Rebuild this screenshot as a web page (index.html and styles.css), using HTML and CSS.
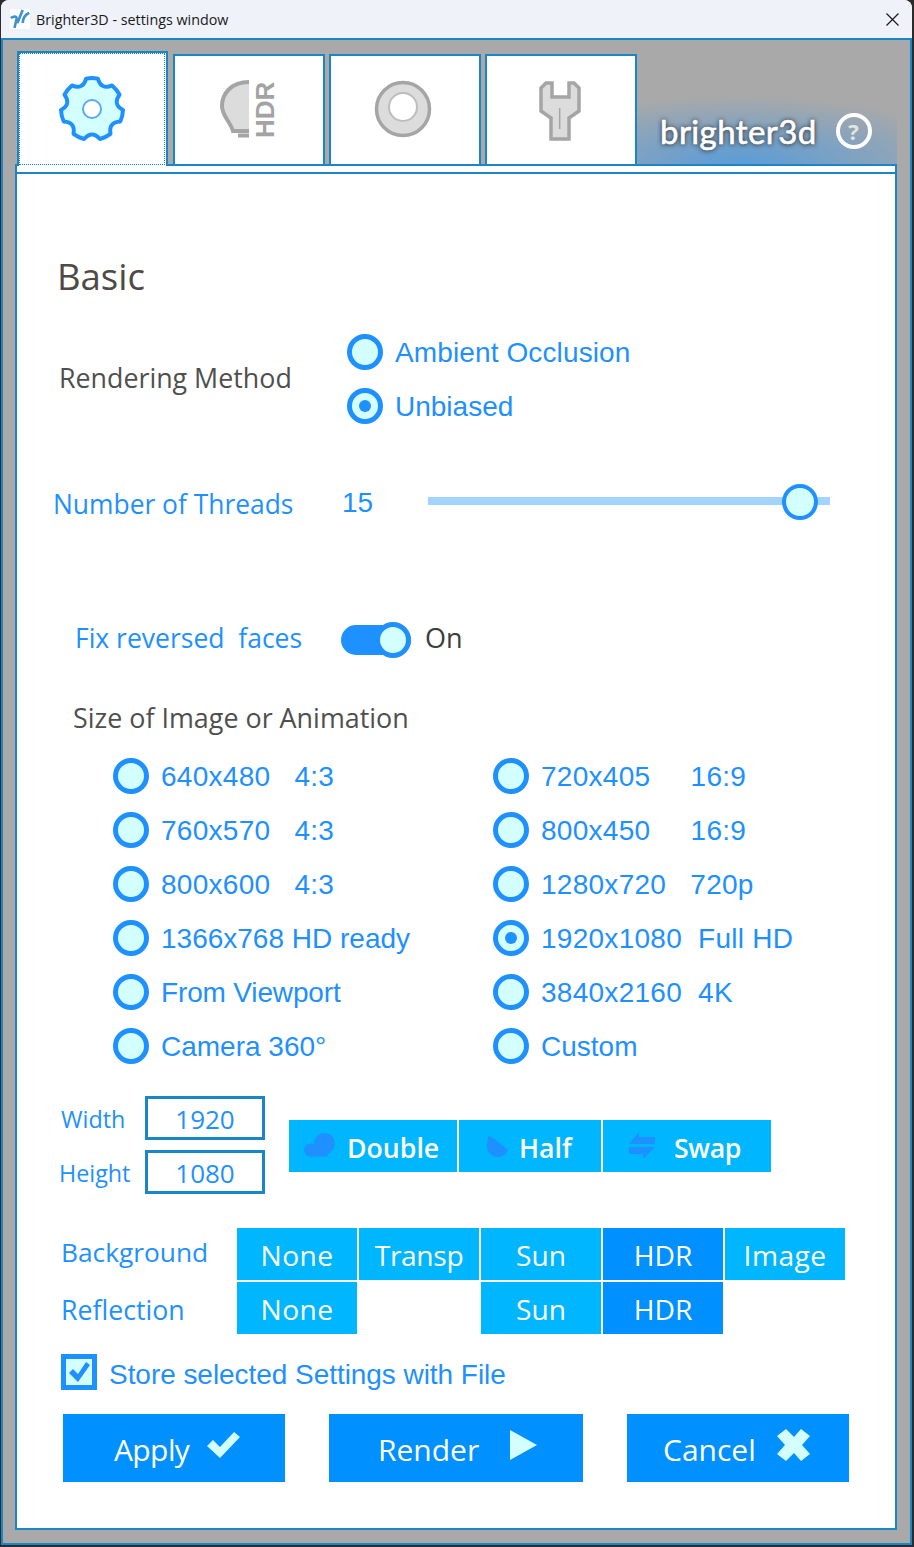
FILE: index.html
```html
<!DOCTYPE html>
<html lang="en">
<head>
<meta charset="utf-8">
<title>Brighter3D - settings window</title>
<link rel="stylesheet" href="styles.css">
</head>
<body>
<div class="window">
  <header class="titlebar">
    <svg class="app-icon" viewBox="0 0 20 20"><rect width="20" height="20" fill="#fff"/><path class="app-stroke" d="M.7 9C4 7 7 7 6.500 10L4.500 19M7.300 14.300L12.700 1M12.700 14C13 9 15 5.500 19.300 4"/></svg>
    <span class="title-text">Brighter3D - settings window</span>
    <svg class="close-icon" viewBox="0 0 13 13"><path d="M.5.5l12 12M12.5.5l-12 12"/></svg>
  </header>
  <main class="main">
    <nav class="tabs">
      <div class="tab tab-active">
        <svg class="gear" viewBox="0 0 68 68"><path class="gear-body" d="M28.1 3.600A31 31 0 0 1 39.900 3.600Q43.100 15.100 54.100 10.400A31 31 0 0 1 61.500 19.700Q54.500 29.300 65 35A31 31 0 0 1 62.300 46.500Q50.400 47.100 52.500 58.900A31 31 0 0 1 41.900 64Q34 55 26.100 64A31 31 0 0 1 15.500 58.900Q17.600 47.100 5.700 46.500A31 31 0 0 1 3 35Q13.500 29.300 6.500 19.700A31 31 0 0 1 13.900 10.400Q24.900 15.100 28.100 3.600Z"/><circle class="gear-hole" cx="34" cy="34" r="9"/></svg>
      </div>
      <div class="tab">
        <svg class="tab-icon" viewBox="0 0 60 60"><path class="gray-fill" d="M30 3C12 3 3 15 3 27c0 10 8 15 11 25h16z"/><path class="gray-line" d="M30 3C12 3 3 15 3 27c0 10 8 15 11 25h16M19 56.500h11"/><text class="hdr-text" transform="translate(55 59) rotate(-90)">HDR</text></svg>
      </div>
      <div class="tab">
        <svg class="tab-icon" viewBox="0 0 60 60"><circle class="gray-disc" cx="28" cy="30" r="26.500"/><circle class="gray-hole" cx="28" cy="28" r="14"/></svg>
      </div>
      <div class="tab">
        <svg class="wrench-icon" viewBox="0 0 60 64"><path class="gray-disc" d="M10 10L15 5H21V19H38V5H43L48 10V33L38 40V61H20V40L10 33Z"/><path class="gray-slit" d="M28.700 30V51"/></svg>
      </div>
      <div class="brand">
        <span class="brand-name">brighter3d</span>
        <span class="help">?</span>
      </div>
    </nav>
    <section class="panel">
      <div class="panel-body">
        <h1 class="heading">Basic</h1>

        <div class="method-row">
          <div class="method-label">Rendering Method</div>
          <div class="method-options">
            <label class="option"><span class="radio"></span><span class="option-text text-ambient">Ambient Occlusion</span></label>
            <label class="option"><span class="radio radio-on"></span><span class="option-text">Unbiased</span></label>
          </div>
        </div>

        <div class="threads-row">
          <div class="threads-label">Number of Threads</div>
          <div class="threads-value">15</div>
          <div class="slider"><span class="slider-thumb"></span></div>
        </div>

        <div class="toggle-row">
          <div class="toggle-label">Fix reversed&nbsp; faces</div>
          <div class="toggle"><span class="toggle-knob"></span></div>
          <div class="toggle-state">On</div>
        </div>

        <div class="size-title">Size of Image or Animation</div>
        <div class="size-grid">
          <label class="option"><span class="radio"></span><span class="option-text text-res">640x480   4:3</span></label>
          <label class="option"><span class="radio"></span><span class="option-text text-res">720x405     16:9</span></label>
          <label class="option"><span class="radio"></span><span class="option-text text-res">760x570   4:3</span></label>
          <label class="option"><span class="radio"></span><span class="option-text text-res">800x450     16:9</span></label>
          <label class="option"><span class="radio"></span><span class="option-text text-res">800x600   4:3</span></label>
          <label class="option"><span class="radio"></span><span class="option-text text-res">1280x720   720p</span></label>
          <label class="option"><span class="radio"></span><span class="option-text">1366x768 HD ready</span></label>
          <label class="option"><span class="radio radio-on"></span><span class="option-text text-res">1920x1080  Full HD</span></label>
          <label class="option"><span class="radio"></span><span class="option-text text-view">From Viewport</span></label>
          <label class="option"><span class="radio"></span><span class="option-text text-res">3840x2160  4K</span></label>
          <label class="option"><span class="radio"></span><span class="option-text">Camera 360°</span></label>
          <label class="option"><span class="radio"></span><span class="option-text">Custom</span></label>
        </div>

        <div class="dims-row">
          <div class="dims">
            <div class="dim"><span class="dim-label dim-label-width">Width</span><span class="dim-box">1920</span></div>
            <div class="dim"><span class="dim-label">Height</span><span class="dim-box">1080</span></div>
          </div>
          <div class="size-buttons">
            <button class="size-btn btn-double">
              <svg class="icon-cloud" viewBox="0 0 31 24"><circle cx="20.500" cy="10.500" r="10.500"/><circle cx="6.500" cy="17" r="6.500"/><rect x="6.500" y="12" width="17" height="11.500"/></svg>
              <span>Double</span>
            </button>
            <button class="size-btn btn-half">
              <svg class="icon-half" viewBox="0 0 21 21"><path d="M1 0C5 0 15 9 21 14c-2 5-6 7-10 7C4 21 0 15 0 10z"/></svg>
              <span>Half</span>
            </button>
            <button class="size-btn btn-swap">
              <svg class="icon-swap" viewBox="0 0 26 27"><path d="M10 0v5h16v7H0zM0 15h26L14 27v-5H0z"/></svg>
              <span class="swap-text">Swap</span>
            </button>
          </div>
        </div>

        <div class="modes">
          <div class="mode-label">Background</div>
          <button class="mode-btn mode-wide">None</button>
          <button class="mode-btn mode-tight">Transp</button>
          <button class="mode-btn">Sun</button>
          <button class="mode-btn mode-on">HDR</button>
          <button class="mode-btn mode-wide">Image</button>
          <div class="mode-label mode-label-low">Reflection</div>
          <button class="mode-btn mode-wide">None</button>
          <span class="mode-gap"></span>
          <button class="mode-btn">Sun</button>
          <button class="mode-btn mode-on">HDR</button>
        </div>

        <label class="store-row">
          <span class="checkbox"><svg class="check-small" viewBox="0 0 24 22"><path d="M2 12l4-4 5 5L19 1l4 3-12 17z"/></svg></span>
          <span class="option-text store-text">Store selected Settings with File</span>
        </label>

        <div class="actions">
          <button class="action action-apply"><span class="apply-text">Apply</span><svg class="action-icon" viewBox="0 0 33 26"><path d="M0 14l6-6 7 7L27 0l6 5-20 21z"/></svg></button>
          <button class="action action-render"><span>Render</span><svg class="action-icon icon-play" viewBox="0 0 27 30"><path d="M0 0l27 15L0 30z"/></svg></button>
          <button class="action action-cancel"><span>Cancel</span><svg class="action-icon icon-x" viewBox="0 0 33 32"><path d="M9 0l8 8 7-8 9 7-8 9 8 9-9 7-7-8-8 8-9-7 8-9-8-9z"/></svg></button>
        </div>
      </div>
    </section>
  </main>
</div>
</body>
</html>
```

FILE: styles.css
```css
* { box-sizing: border-box; }
html, body { margin: 0; padding: 0; }
body {
  width: 914px;
  height: 1547px;
  background: #2b2b2b;
  font-family: "Open Sans", "Noto Sans", sans-serif;
  overflow: hidden;
}
button { border: 0; padding: 0; margin: 0; cursor: pointer; font-family: inherit; color: #fff; }
label { cursor: pointer; }

.window {
  width: 911px;
  height: 1545px;
  margin-left: 1px;
  border-radius: 8px 8px 0 0;
  overflow: hidden;
  display: flex;
  flex-direction: column;
  background: #eef1f9;
}

/* title bar */
.titlebar {
  height: 38px;
  flex: none;
  display: flex;
  align-items: center;
  padding: 0 13px 0 9px;
  background: #eff2f9;
}
.app-icon { width: 20px; height: 20px; flex: none; }
.app-stroke { fill: none; stroke: #3f92cc; stroke-width: 2.6; }
.title-text { margin-left: 6px; font-size: 14.3px; color: #1a1a1a; flex: 1; }
.close-icon { width: 13px; height: 13px; fill: none; stroke: #1a1a1a; stroke-width: 1.2; }

/* main area */
.main {
  flex: 1;
  min-height: 0;
  display: flex;
  flex-direction: column;
  background: #a9a9a9;
  border: 2px solid #1a85c7;
  padding: 11px 13px 13px 12px;
}

/* tabs */
.tabs {
  display: flex;
  align-items: flex-end;
  gap: 4px;
  height: 113px;
  padding-left: 2px;
  flex: none;
  position: relative;
  z-index: 1;
}
.tab {
  width: 152px;
  height: 110px;
  flex: none;
  display: flex;
  align-items: center;
  justify-content: center;
  background: #fff;
  border: 2px solid #1a85c7;
  border-bottom: 0;
}
.tab-active {
  width: 151px;
  height: 115px;
  margin-bottom: -2px;
  margin-right: 1px;
  position: relative;
}
.tab-active::after {
  content: "";
  position: absolute;
  inset: 0 1px 1px 0;
  border: 1px dotted #1a85c7;
}
.gear { width: 68px; height: 68px; margin-top: -1px; margin-right: 1px; }
.gear-body { fill: #d4ffff; stroke: #1e90ff; stroke-width: 4; stroke-linejoin: round; }
.gear-hole { fill: #fff; stroke: #5aa9f5; stroke-width: 2; }
.tab-icon { width: 60px; height: 60px; margin-top: -2px; overflow: visible; }
.wrench-icon { width: 60px; height: 64px; }
.gray-fill { fill: #dcdcdc; }
.gray-line { fill: none; stroke: #a5a5a5; stroke-width: 4; }
.gray-disc { fill: #dcdcdc; stroke: #a5a5a5; stroke-width: 3.5; }
.gray-hole { fill: #fff; stroke: #bdbdbd; stroke-width: 2; }
.gray-slit { fill: none; stroke: #a5a5a5; stroke-width: 1.5; }
.hdr-text {
  font-family: "Liberation Sans", Arial, sans-serif;
  font-weight: 700;
  font-size: 26px;
  fill: #a3a3a3;
}

/* brand */
.brand {
  flex: 1;
  height: 110px;
  display: flex;
  align-items: flex-end;
  padding: 0 0 15px 23px;
  margin-left: -4px;
  background: radial-gradient(ellipse 240px 68px at 103px 100%, #5a9cd8 0%, rgba(90, 156, 216, 0) 100%);
}
.brand-name {
  font-family: Lato, "Open Sans", sans-serif;
  font-size: 33px;
  line-height: 36px;
  letter-spacing: .4px;
  color: #fff;
  -webkit-text-stroke: .6px #fff;
  text-shadow: 0 0 4px rgba(50, 50, 50, .9), 0 1px 5px rgba(50, 50, 50, .6);
}
.help {
  width: 36px;
  height: 36px;
  margin-left: 19px;
  border: 4px solid #fff;
  border-radius: 50%;
  display: flex;
  align-items: center;
  justify-content: center;
  font-size: 22px;
  font-weight: 700;
  color: #e4e4e4;
}

/* panel */
.panel {
  flex: 1;
  min-height: 0;
  background: #fff;
  border: 2px solid #1a85c7;
  padding-top: 6px;
}
.panel-body {
  height: 100%;
  border-top: 2px solid #1a85c7;
}
.heading {
  margin: 78px 0 0;
  padding-left: 40px;
  font-size: 36.5px;
  line-height: 48px;
  font-weight: 400;
  color: #4f4a45;
}

/* common option */
.option { display: flex; align-items: center; gap: 12px; height: 36px; }
.option-text {
  font-family: "Liberation Sans", Arial, sans-serif;
  font-size: 28px;
  padding-top: 2px;
  color: #1e90ff;
  white-space: pre;
}
.text-res { letter-spacing: .27px; }
.text-ambient { letter-spacing: .12px; }
.text-view { letter-spacing: -.15px; }
.radio {
  width: 36px;
  height: 36px;
  flex: none;
  border: 5px solid #1e90ff;
  border-radius: 50%;
  background: #d4ffff;
  display: flex;
  align-items: center;
  justify-content: center;
}
.radio-on::before {
  content: "";
  width: 12px;
  height: 12px;
  border-radius: 50%;
  background: #1e90ff;
}

/* rendering method */
.method-row { display: flex; align-items: center; margin-top: 34px; }
.method-label { width: 330px; padding: 0 0 4px 42px; font-size: 26.8px; color: #4f4f4f; }
.method-options { display: flex; flex-direction: column; gap: 18px; }

/* threads */
.threads-row { display: flex; align-items: center; height: 36px; margin-top: 60px; }
.threads-label { width: 325px; padding-left: 36px; padding-top: 3px; font-size: 26.4px; color: #1e90ff; }
.threads-value {
  width: 86px;
  padding-top: 2px;
  font-family: "Liberation Sans", Arial, sans-serif;
  font-size: 28px;
  color: #1e90ff;
}
.slider { width: 402px; height: 8px; margin-top: -2px; background: #a3d3ff; position: relative; }
.slider-thumb {
  position: absolute;
  left: 354px;
  top: -13px;
  width: 36px;
  height: 36px;
  border: 4px solid #1e90ff;
  border-radius: 50%;
  background: #d4ffff;
}

/* toggle */
.toggle-row { display: flex; align-items: center; height: 36px; margin-top: 102px; }
.toggle-label { width: 324px; padding: 0 0 4px 58px; font-size: 26.5px; color: #1e90ff; white-space: pre; }
.toggle {
  width: 70px;
  height: 30px;
  border-radius: 15px;
  background: #1e90ff;
  position: relative;
}
.toggle-knob {
  position: absolute;
  right: 0;
  top: -3px;
  width: 36px;
  height: 36px;
  border: 5px solid #1e90ff;
  border-radius: 50%;
  background: #d4ffff;
}
.toggle-state { margin-left: 14px; padding-bottom: 6px; font-size: 27px; color: #3d3d3d; }

/* size */
.size-title {
  margin-top: 41px;
  padding-left: 56px;
  font-size: 26.9px;
  line-height: 38px;
  color: #4f4f4f;
}
.size-grid {
  display: grid;
  grid-template-columns: 380px 1fr;
  row-gap: 18px;
  margin-top: 21px;
  padding-left: 96px;
}

/* dimensions */
.dims-row { display: flex; align-items: center; margin-top: 32px; }
.dims { display: flex; flex-direction: column; gap: 10px; width: 248px; margin-right: 24px; }
.dim { display: flex; align-items: center; }
.dim-label { width: 128px; padding: 2px 0 0 42px; font-size: 23.3px; color: #1e90ff; }
.dim-label-width { padding-left: 44px; }
.dim-box {
  width: 120px;
  height: 44px;
  padding-top: 2px;
  border: 3px solid #1a85c7;
  display: flex;
  align-items: center;
  justify-content: center;
  font-size: 26px;
  color: #1e90ff;
}
.size-buttons { display: flex; gap: 2px; margin-top: 2px; }
.size-btn {
  height: 52px;
  padding-top: 2px;
  display: flex;
  align-items: center;
  background: #00b6ff;
  font-size: 26.7px;
  font-weight: 600;
}
.btn-double { width: 168px; padding-left: 15px; gap: 12px; }
.btn-half { width: 142px; padding-left: 28px; gap: 12px; }
.btn-swap { width: 168px; padding-left: 26px; gap: 19px; }
.btn-half span { margin-left: -1px; }
.swap-text { letter-spacing: -.4px; }
.icon-cloud { width: 31px; height: 24px; fill: #1e90ff; margin-top: -4px; }
.icon-half { width: 21px; height: 21px; fill: #1e90ff; margin-top: -2px; }
.icon-swap { width: 26px; height: 27px; fill: #1e90ff; margin-top: -3px; }

/* background / reflection */
.modes {
  display: grid;
  grid-template-columns: 220px repeat(5, 122px);
  grid-auto-rows: 52px;
  row-gap: 2px;
  margin-top: 34px;
}
.mode-btn, .mode-gap { width: 120px; }
.mode-label { padding-left: 44px; font-size: 26.3px; line-height: 48px; color: #1e90ff; }
.mode-label-low { line-height: 56px; font-size: 26.7px; }
.mode-btn { padding-top: 2px; background: #00b6ff; font-size: 28.2px; }
.mode-wide { letter-spacing: .4px; }
.mode-tight { letter-spacing: -.35px; }
.mode-on { background: #0090ff; }

/* store */
.store-row { display: flex; align-items: center; gap: 12px; height: 36px; margin-top: 20px; padding-left: 44px; }
.store-text { padding-top: 6px; letter-spacing: -.05px; }
.checkbox {
  width: 36px;
  height: 36px;
  flex: none;
  border: 5px solid #1e90ff;
  background: #d4ffff;
  display: flex;
  align-items: center;
  justify-content: center;
}
.check-small { width: 24px; height: 22px; fill: #1e90ff; }

/* actions */
.actions { display: flex; gap: 44px; margin-top: 24px; padding-left: 46px; }
.action {
  height: 68px;
  padding-top: 2px;
  display: flex;
  align-items: center;
  background: #0090ff;
  font-size: 30px;
}
.action-icon { fill: #d4ffff; margin-top: -8px; flex: none; }
.apply-text { letter-spacing: -.6px; }
.action-apply { width: 222px; padding-left: 51px; gap: 18px; }
.action-apply .action-icon { width: 33px; height: 26px; }
.action-render { width: 254px; padding-left: 49px; gap: 31px; }
.icon-play { width: 27px; height: 30px; }
.action-cancel { width: 222px; padding-left: 36px; gap: 21px; }
.icon-x { width: 33px; height: 32px; }
```
